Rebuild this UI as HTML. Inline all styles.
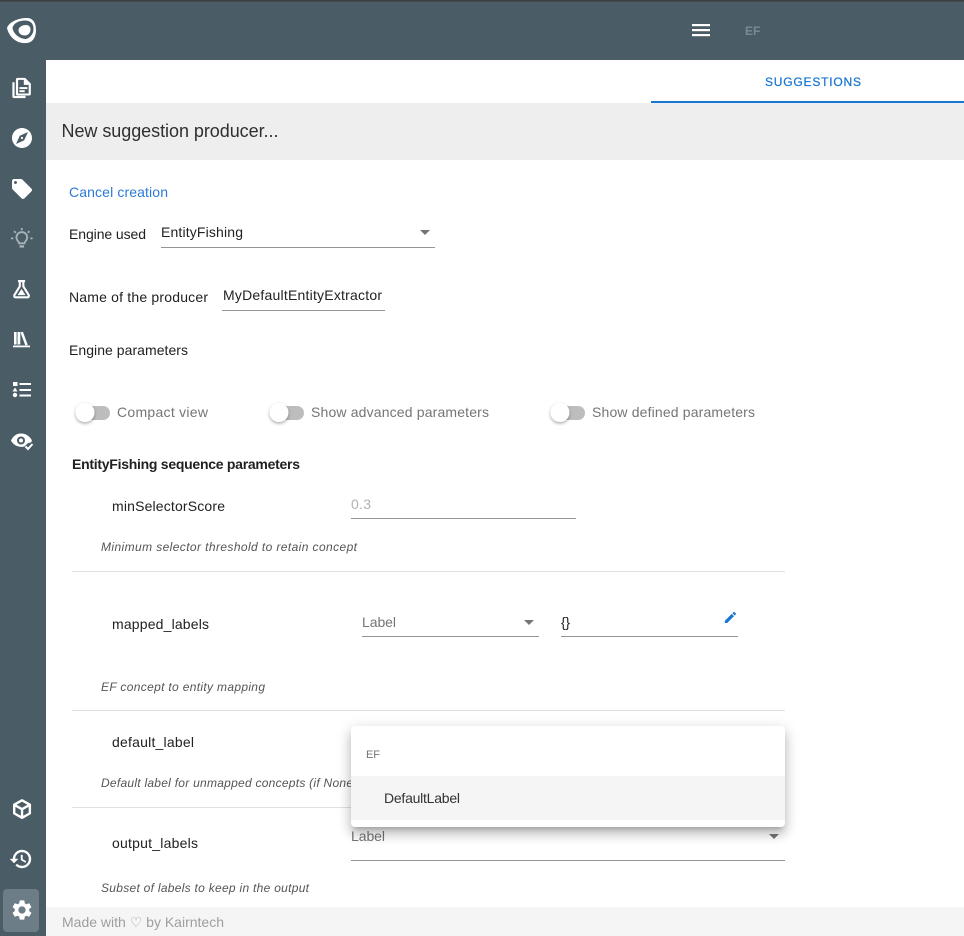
<!DOCTYPE html>
<html><head><meta charset="utf-8"><style>
html,body{margin:0;padding:0;width:964px;height:936px;overflow:hidden;background:#fff;font-family:"Liberation Sans",sans-serif}
svg{position:absolute;left:0;top:0}
text{font-family:"Liberation Sans",sans-serif;font-size:14px;fill:#212121}
.g{fill:#757575}.h{font-size:12px;font-style:italic;fill:#555}
#menu{position:absolute;left:351px;top:726px;width:434px;height:101px;background:#fff;border-radius:4px;box-shadow:0 5px 5px -3px rgba(0,0,0,.2),0 8px 10px 1px rgba(0,0,0,.14),0 3px 14px 2px rgba(0,0,0,.12)}
#hl{position:absolute;left:0;top:50px;width:434px;height:44px;background:#f5f5f5}
</style></head><body>
<svg width="964" height="936" viewBox="0 0 964 936">
<rect width="964" height="60" fill="#4a5c66"/><rect width="46" height="936" fill="#4a5c66"/><rect width="964" height="1.5" fill="#3d3d3d"/>
<rect x="46" y="103" width="918" height="57" fill="#eee"/>
<rect x="651" y="101" width="313" height="2" fill="#1976d2"/>
<rect x="46" y="907" width="918" height="29" fill="#f5f5f5"/>
<rect x="3" y="889" width="36" height="43" rx="4" fill="#6c7d87"/>

<!-- logo -->
<path fill="#fff" fill-rule="evenodd" d="M7 28C9 22 18 18 27 18 33 18 36 23 36 30 36 38 32 43 26 43 17 44 9 37 7 28ZM12.500 27.500C13 34 20 39 26 39 30 38 33.500 34 33.500 29 33.500 23 30 20.500 25 20.500 19 20.500 14 23 12.500 27.500Z"/>
<path fill="#fff" d="M18.500 30.500C18.500 27 22 25 26 25 29 25 30.500 27 30.500 29.500 30.500 33 28 35.500 25 35.500 21 35.500 18.500 33 18.500 30.500Z"/>

<!-- doc multiple -->
<g fill="#fff" transform="translate(11.500,77) scale(.88)"><path d="M1 6h2.500v15.500H16V24H3a2 2 0 0 1-2-2z"/><path fill-rule="evenodd" d="M7 1h8.500L22 7.500V19a2 2 0 0 1-2 2H7a2 2 0 0 1-2-2V3a2 2 0 0 1 2-2zm.5 2.300v15.400h12V9H14V3.300z"/><rect x="9" y="11.500" width="9" height="2.200"/><rect x="9" y="15" width="6" height="2.200"/></g>
<!-- explore -->
<g transform="translate(10,126)"><path fill="#fff" d="M12 10.900c-.61 0-1.100.49-1.100 1.100s.49 1.100 1.100 1.100c.61 0 1.100-.49 1.100-1.100s-.49-1.100-1.100-1.100zM12 2C6.480 2 2 6.480 2 12s4.480 10 10 10 10-4.480 10-10S17.520 2 12 2zm2.190 12.190L6 18l3.810-8.190L18 6l-3.810 8.190z"/></g>
<!-- tag -->
<g transform="translate(10,177)"><path fill="#fff" d="M21.410 11.580l-9-9C12.050 2.220 11.550 2 11 2H4c-1.100 0-2 .9-2 2v7c0 .55.22 1.050.59 1.420l9 9c.36.36.86.58 1.410.58.55 0 1.050-.22 1.410-.59l7-7c.37-.36.59-.86.59-1.410 0-.55-.23-1.060-.59-1.420zM5.500 7C4.670 7 4 6.330 4 5.500S4.670 4 5.500 4 7 4.670 7 5.500 6.330 7 5.500 7z"/></g>
<!-- bulb (dimmed) -->
<g transform="translate(11,228) scale(.9)" fill="none" stroke="#a9b3b8" stroke-width="2"><path d="M9 17c0-2-3-3-3-6.500a6 6 0 0 1 12 0C18 14 15 15 15 17z"/><path d="M9.500 20.500h5" stroke-width="2.600"/><path d="M12 0v2.500M3.500 3.500l1.800 1.800M20.500 3.500l-1.800 1.800M0 11.500h2.500M21.500 11.500H24"/></g>
<!-- flask -->
<g transform="translate(11,278) scale(.88)"><path fill="none" stroke="#fff" stroke-width="2.400" stroke-linejoin="round" d="M8 3.500h8M10 3.500v6L3.800 19.500c-.6 1.200.2 2.500 1.500 2.500h13.400c1.300 0 2.100-1.300 1.500-2.500L14 9.500v-6"/><path fill="#fff" d="M12 12.500l4.500 7h-9z"/></g>
<!-- books -->
<g fill="#fff"><rect x="14" y="332" width="2.600" height="12.500"/><rect x="17.500" y="332" width="2.800" height="12.500"/><path d="M21 332.500l2.400-.8 4.800 13-2.400.8z" transform="translate(-.5,0)"/><rect x="13" y="345.500" width="17" height="1.800"/></g>
<!-- list -->
<g fill="#fff" transform="translate(10,378)"><rect x="3" y="4" width="4.500" height="4"/><path d="M5 9.500l2.500 4h-5z"/><circle cx="5" cy="17" r="2.200"/><rect x="9.500" y="5" width="11.500" height="2"/><rect x="9.500" y="11" width="11.500" height="2"/><rect x="9.500" y="16.500" width="11.500" height="2"/></g>
<!-- eye check -->
<g transform="translate(10,429)"><path fill="#fff" fill-rule="evenodd" d="M11 4.500c5 0 9 3 11 7l-1 2-3 .5-3.500 3.500C9 19 3 16 1 11.500 3 7.500 6 4.500 11 4.500zm0 3a4 4 0 1 0 0 8 4 4 0 0 0 0-8z"/><circle cx="11" cy="11.500" r="2" fill="#fff"/><path fill="none" stroke="#fff" stroke-width="2" d="M15.500 17.500l2.500 2.500 4.500-5"/></g>
<!-- cube -->
<g transform="translate(11,798) scale(.92)"><path fill="none" stroke="#fff" stroke-width="2.600" stroke-linejoin="round" d="M12 2.500l8.500 4.800v9.400L12 21.500l-8.500-4.800V7.300zM3.800 7.500l8.200 4.700 8.200-4.700M12 12.200v9"/></g>
<!-- history -->
<g transform="translate(9,847)"><path fill="#fff" stroke="#fff" stroke-width=".4" d="M13 3c-4.970 0-9 4.030-9 9H1l3.890 3.890.07.14L9 12H6c0-3.870 3.130-7 7-7s7 3.130 7 7-3.130 7-7 7c-1.930 0-3.680-.79-4.940-2.060l-1.420 1.420C8.270 19.990 10.510 21 13 21c4.970 0 9-4.030 9-9s-4.030-9-9-9zm-1 5v5l4.280 2.540.72-1.210-3.500-2.080V8H12z"/></g>
<!-- settings -->
<g transform="translate(10,898)"><path fill="#fff" d="M19.140 12.940c.04-.3.06-.61.06-.94 0-.32-.02-.64-.07-.94l2.030-1.580c.18-.14.23-.41.12-.61l-1.920-3.320c-.12-.22-.37-.29-.59-.22l-2.390.96c-.5-.38-1.030-.7-1.620-.94l-.36-2.540c-.04-.24-.24-.41-.48-.41h-3.840c-.24 0-.43.17-.47.41l-.36 2.540c-.59.24-1.130.57-1.620.94l-2.390-.96c-.22-.08-.47 0-.59.22L2.740 8.870c-.12.21-.08.47.12.61l2.030 1.580c-.05.3-.09.63-.09.94s.02.64.07.94l-2.030 1.580c-.18.14-.23.41-.12.61l1.920 3.320c.12.22.37.29.59.22l2.390-.96c.5.38 1.030.7 1.620.94l.36 2.540c.05.24.24.41.48.41h3.840c.24 0 .44-.17.47-.41l.36-2.540c.59-.24 1.130-.56 1.620-.94l2.390.96c.22.08.47 0 .59-.22l1.920-3.320c.12-.22.07-.47-.12-.61l-2.010-1.580zM12 15.600c-1.980 0-3.600-1.620-3.600-3.600s1.620-3.600 3.600-3.600 3.600 1.620 3.600 3.600-1.620 3.600-3.600 3.600z"/></g>

<!-- header -->
<g fill="#fff"><rect x="692" y="24" width="18" height="2.200"/><rect x="692" y="29" width="18" height="2.200"/><rect x="692" y="34" width="18" height="2.200"/></g>
<text x="745" y="35" style="font-size:12px;font-weight:bold;fill:#7b8a92">EF</text>
<text x="765" y="86" style="font-size:12px;fill:#1976d2;stroke:#1976d2;stroke-width:.25" textLength="96" lengthAdjust="spacing">SUGGESTIONS</text>
<text x="61.500" y="137" style="font-size:18px;fill:#2f2f2f" textLength="217" lengthAdjust="spacing">New suggestion producer...</text>

<text x="69" y="197" style="fill:#2a7bd8" textLength="99" lengthAdjust="spacing">Cancel creation</text>
<text x="69" y="239" textLength="77" lengthAdjust="spacing">Engine used</text>
<text x="161" y="237" textLength="82" lengthAdjust="spacing">EntityFishing</text>
<rect x="161" y="247" width="274" height="1" fill="#949494"/>
<path d="M420 230h10l-5 5z" fill="#757575"/>
<text x="69" y="302" textLength="139" lengthAdjust="spacing">Name of the producer</text>
<text x="223" y="300" textLength="159" lengthAdjust="spacing">MyDefaultEntityExtractor</text>
<rect x="222" y="310" width="163" height="1" fill="#949494"/>
<text x="69" y="355" textLength="119" lengthAdjust="spacing">Engine parameters</text>

<!-- toggles -->
<defs><filter id="s" x="-50%" y="-50%" width="200%" height="200%"><feDropShadow dx="0" dy="1.500" stdDeviation="1.500" flood-color="#000" flood-opacity=".35"/></filter></defs>
<rect x="76" y="406" width="34" height="14" rx="7" fill="#bdbdbd"/><circle cx="85" cy="412.500" r="9.500" fill="#fff" filter="url(#s)"/>
<rect x="270" y="406" width="34" height="14" rx="7" fill="#bdbdbd"/><circle cx="279" cy="412.500" r="9.500" fill="#fff" filter="url(#s)"/>
<rect x="551" y="406" width="34" height="14" rx="7" fill="#bdbdbd"/><circle cx="560" cy="412.500" r="9.500" fill="#fff" filter="url(#s)"/>
<text class="g" x="117" y="417" textLength="91" lengthAdjust="spacing">Compact view</text>
<text class="g" x="311" y="417" textLength="178" lengthAdjust="spacing">Show advanced parameters</text>
<text class="g" x="592" y="417" textLength="163" lengthAdjust="spacing">Show defined parameters</text>

<text x="72" y="469" style="font-weight:bold" textLength="228" lengthAdjust="spacing">EntityFishing sequence parameters</text>

<text x="112" y="511" textLength="113" lengthAdjust="spacing">minSelectorScore</text>
<text x="351" y="509" style="fill:#b5b0b0" textLength="20" lengthAdjust="spacing">0.3</text>
<rect x="351" y="518" width="225" height="1" fill="#949494"/>
<text class="h" x="101" y="551" textLength="256" lengthAdjust="spacing">Minimum selector threshold to retain concept</text>
<rect x="72" y="571" width="713" height="1" fill="#e0e0e0"/>

<text x="112" y="629" textLength="97" lengthAdjust="spacing">mapped_labels</text>
<text class="g" x="362" y="627" textLength="34" lengthAdjust="spacing">Label</text>
<rect x="362" y="636" width="177" height="1" fill="#949494"/>
<path d="M524 620h10l-5 5z" fill="#757575"/>
<text x="561" y="627" textLength="9" lengthAdjust="spacing">{}</text>
<rect x="561" y="636" width="177" height="1" fill="#949494"/>
<path transform="translate(723,610) scale(.62)" fill="#1976d2" d="M3 17.250V21h3.750L17.810 9.940l-3.750-3.750L3 17.250zM20.710 7.040c.39-.39.39-1.020 0-1.410l-2.340-2.340c-.39-.39-1.020-.39-1.410 0l-1.830 1.830 3.750 3.750 1.830-1.830z"/>
<text class="h" x="101" y="691" textLength="164" lengthAdjust="spacing">EF concept to entity mapping</text>
<rect x="72" y="710" width="713" height="1" fill="#e0e0e0"/>

<text x="112" y="747" textLength="82" lengthAdjust="spacing">default_label</text>
<text class="h" x="101" y="787" textLength="252" lengthAdjust="spacing">Default label for unmapped concepts (if None</text>
<rect x="72" y="807" width="713" height="1" fill="#e0e0e0"/>

<text x="112" y="848" textLength="86" lengthAdjust="spacing">output_labels</text>
<text class="g" x="351" y="841" textLength="34" lengthAdjust="spacing">Label</text>
<rect x="351" y="860" width="434" height="1" fill="#949494"/>
<path d="M769 834h10l-5 5z" fill="#757575"/>
<text class="h" x="101" y="892" textLength="208" lengthAdjust="spacing">Subset of labels to keep in the output</text>

<text x="62" y="927" style="fill:#9e9e9e" textLength="162" lengthAdjust="spacing">Made with ♡ by Kairntech</text>
</svg>
<div id="menu"><div id="hl"></div>
<svg width="434" height="101" viewBox="0 0 434 101">
<text x="15" y="32" style="font-size:11px;fill:#757575" textLength="14" lengthAdjust="spacing">EF</text>
<text x="33" y="77" style="fill:#333" textLength="76" lengthAdjust="spacing">DefaultLabel</text>
</svg></div>
</body></html>
